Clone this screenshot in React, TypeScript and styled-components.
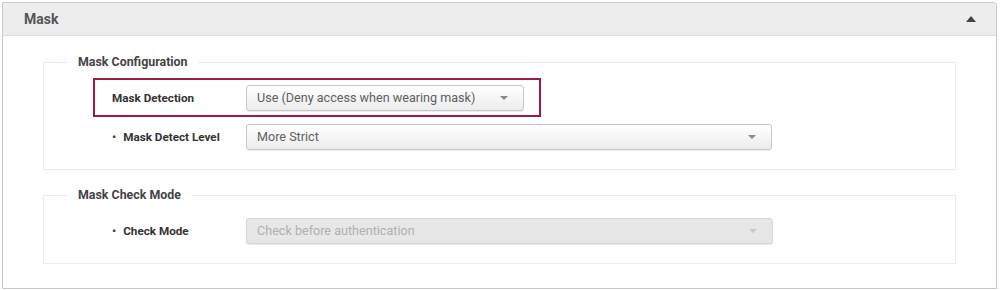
import React from "react";
import styled, { createGlobalStyle } from "styled-components";

const Global = createGlobalStyle`
  html, body { margin: 0; padding: 0; background: #fff; }
  body { font-family: Roboto, "Liberation Sans", Arial, sans-serif; }
`;

const Panel = styled.section`
  margin: 2px 0 0 2px;
  width: 993px;
  border: 1px solid #c9c9c9;
  border-radius: 0 4px 0 0;
  background: #fff;
  box-sizing: content-box;
`;

const Header = styled.header`
  height: 32px;
  display: flex;
  align-items: center;
  justify-content: space-between;
  padding: 0 20px 0 21px;
  background: #ededed;
  border-bottom: 1px solid #dcdcdc;
  border-radius: 0 4px 0 0;
`;

const Title = styled.h2`
  margin: 0;
  font-size: 14px;
  font-weight: 700;
  color: #555;
`;

const Caret = styled.span<{ $color: string; $up?: boolean; $size?: number }>`
  width: 0;
  height: 0;
  border-left: ${(p) => p.$size ?? 5}px solid transparent;
  border-right: ${(p) => p.$size ?? 5}px solid transparent;
  ${(p) =>
    p.$up
      ? `border-bottom: ${(p.$size ?? 5) + 1}px solid ${p.$color};`
      : `border-top: ${p.$size ?? 5}px solid ${p.$color};`}
`;

const Body = styled.div`
  padding: 18px 40px 24px 40px;
  display: flex;
  flex-direction: column;
  gap: 17px;
`;

const Group = styled.fieldset`
  margin: 0;
  padding: 8px 0 13px 0;
  border: 1px solid #ececec;
  min-width: 0;
`;

const Legend = styled.legend`
  margin-left: 24px;
  padding: 0 10px;
  font-size: 12.4px;
  line-height: 16px;
  font-weight: 700;
  color: #444;
`;

const Row = styled.div<{ $highlight?: boolean }>`
  display: flex;
  align-items: center;
  height: 35px;
  padding: 0 15px 0 17px;
  border: 2px solid ${(p) => (p.$highlight ? "#9b1c3c" : "transparent")};
`;

const Rows = styled.div`
  display: flex;
  flex-direction: column;
  align-items: flex-start;
  padding-left: 49px;
`;

const Label = styled.div<{ $bullet?: boolean }>`
  width: 134px;
  flex: none;
  font-size: 11.7px;
  font-weight: 700;
  color: #333;
  display: flex;
  align-items: center;
  &::before {
    content: ${(p) => (p.$bullet ? '"•"' : "none")};
    margin-right: 7px;
    font-weight: 700;
    color: #444;
  }
`;

const Select = styled.div<{ $width: number; $disabled?: boolean }>`
  width: ${(p) => p.$width}px;
  height: 24px;
  box-sizing: content-box;
  display: flex;
  align-items: center;
  justify-content: space-between;
  padding: 0 15px 0 10px;
  border: 1px solid ${(p) => (p.$disabled ? "#d6d6d6" : "#c8c8c8")};
  border-radius: 3px;
  background: ${(p) =>
    p.$disabled ? "#e7e7e7" : "linear-gradient(#ffffff, #ececec)"};
  box-shadow: 0 1px 1px rgba(0, 0, 0, 0.08);
  font-size: 12.6px;
  color: ${(p) => (p.$disabled ? "#b0b0b0" : "#606060")};
`;

const SelectText = styled.span`
  white-space: nowrap;
`;

export default function App() {
  return (
    <>
      <Global />
      <Panel>
        <Header>
          <Title>Mask</Title>
          <Caret $color="#444" $up />
        </Header>
        <Body>
          <Group>
            <Legend>Mask Configuration</Legend>
            <Rows>
              <Row $highlight>
                <Label>Mask Detection</Label>
                <Select $width={251}>
                  <SelectText>Use (Deny access when wearing mask)</SelectText>
                  <Caret $color="#888" $size={4} />
                </Select>
              </Row>
              <Row>
                <Label $bullet>Mask Detect Level</Label>
                <Select $width={499}>
                  <SelectText>More Strict</SelectText>
                  <Caret $color="#888" $size={4} />
                </Select>
              </Row>
            </Rows>
          </Group>
          <Group>
            <Legend>Mask Check Mode</Legend>
            <Rows>
              <Row>
                <Label $bullet>Check Mode</Label>
                <Select $width={500} $disabled>
                  <SelectText>Check before authentication</SelectText>
                  <Caret $color="#c8c8c8" $size={4} />
                </Select>
              </Row>
            </Rows>
          </Group>
        </Body>
      </Panel>
    </>
  );
}
